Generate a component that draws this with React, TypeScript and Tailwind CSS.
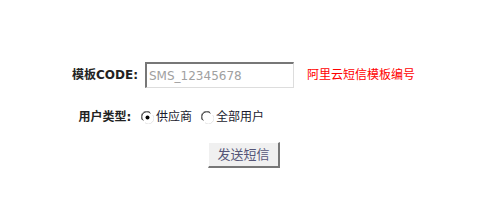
import React, { useState } from 'react';

const font = { fontFamily: '"DejaVu Sans", "Noto Sans CJK SC", sans-serif' };

function Radio({ checked }: { checked: boolean }) {
  return (
    <svg width="13" height="13" viewBox="0 0 13 13" className="shrink-0">
      <circle cx="6.5" cy="6.5" r="6" fill="#fff" />
      <path d="M1.3 9A5.5 5.5 0 0 1 9 1.3" fill="none" stroke="#808080" strokeWidth="1" />
      <path d="M2.3 9.5A4.5 4.5 0 0 1 9.5 2.3" fill="none" stroke="#404040" strokeWidth="1" />
      <path d="M11.7 4A5.5 5.5 0 0 1 4 11.7" fill="none" stroke="#e4e4e4" strokeWidth="1" />
      {checked && <circle cx="6.5" cy="6.5" r="2" fill="#000" />}
    </svg>
  );
}

export default function App() {
  const [userType, setUserType] = useState<'supplier' | 'all'>('supplier');

  return (
    <div className="w-full h-[210px] bg-white flex justify-center pt-[62px]" style={font}>
      <div className="flex flex-col w-[348px]">
        {/* 模板CODE */}
        <div className="flex items-center h-[26px]">
          <div className="w-[70px] text-center text-[12px] font-bold text-[#222]">模板CODE:</div>
          <input
            defaultValue="SMS_12345678"
            className="ml-[5px] w-[149px] h-[26px] px-[2px] text-[12px] text-[#a0a0a0] bg-white border-t-2 border-l-2 border-t-[#777] border-l-[#777] border-b border-r border-b-[#ddd] border-r-[#ddd] outline-none"
          />
          <span className="ml-[13px] text-[12px] text-[#ff0000]">阿里云短信模板编号</span>
        </div>

        {/* 用户类型 */}
        <div className="flex items-center h-[20px] mt-[19px]">
          <div className="w-[70px] text-center text-[12px] font-bold text-[#222]">用户类型:</div>
          <label className="flex items-center ml-[1px] cursor-pointer" onClick={() => setUserType('supplier')}>
            <Radio checked={userType === 'supplier'} />
            <span className="ml-[2px] text-[12px] text-[#1a1a2e]">供应商</span>
          </label>
          <label className="flex items-center ml-[9px] cursor-pointer" onClick={() => setUserType('all')}>
            <Radio checked={userType === 'all'} />
            <span className="ml-[2px] text-[12px] text-[#1a1a2e]">全部用户</span>
          </label>
        </div>

        {/* 发送短信 */}
        <div className="flex justify-center mt-[15px]">
          <button className="w-[72px] h-[26px] text-[13px] text-[#555577] bg-[#f0f0f0] border-t border-l border-t-[#fff] border-l-[#fff] border-b-2 border-r-2 border-b-[#777] border-r-[#777]">
            发送短信
          </button>
        </div>
      </div>
    </div>
  );
}
